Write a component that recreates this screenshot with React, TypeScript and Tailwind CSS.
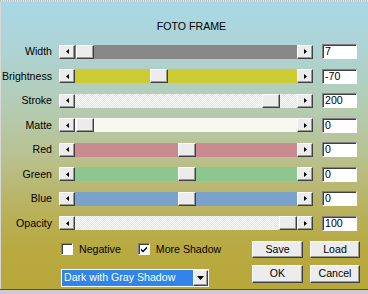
const raised =
  "border border-t-white border-l-white border-r-[#404040] border-b-[#404040] shadow-[inset_-1px_-1px_#9a9a9a] bg-[#ececec]";
const sunken =
  "border border-t-[#808080] border-l-[#808080] border-r-white border-b-white shadow-[inset_1px_1px_#404040] bg-white";

type Row = { label: string; value: string; thumb: number; track: string };

const rows: Row[] = [
  { label: "Width", value: "7", thumb: 1, track: "bg-[#888888]" },
  { label: "Brightness", value: "-70", thumb: 75, track: "bg-[#cccb33]" },
  {
    label: "Stroke",
    value: "200",
    thumb: 187,
    track: "bg-[repeating-conic-gradient(#ffffff_0_25%,#e2e2e2_0_50%)] bg-size-[2px_2px]",
  },
  { label: "Matte", value: "0", thumb: 1, track: "bg-[#f8f8f2]" },
  { label: "Red", value: "0", thumb: 103, track: "bg-[#c98a90]" },
  { label: "Green", value: "0", thumb: 103, track: "bg-[#8cc78f]" },
  { label: "Blue", value: "0", thumb: 103, track: "bg-[#7ba2ca]" },
  {
    label: "Opacity",
    value: "100",
    thumb: 204,
    track: "bg-[repeating-conic-gradient(#ffffff_0_25%,#e2e2e2_0_50%)] bg-size-[2px_2px]",
  },
];

function Arrow({ dir }: { dir: "left" | "right" | "down" }) {
  if (dir === "down")
    return (
      <svg width="7" height="4" viewBox="0 0 7 4">
        <path d="M0 0h7L3.5 4z" fill="#000" />
      </svg>
    );
  return (
    <svg width="3" height="5" viewBox="0 0 3 5">
      <path d={dir === "left" ? "M3 0v5L0 2.5z" : "M0 0v5l3-2.5z"} fill="#000" />
    </svg>
  );
}

function Slider({ row }: { row: Row }) {
  return (
    <div className="flex h-[14px] w-[254px]">
      <div className={`flex w-[16px] items-center justify-center ${raised}`}>
        <Arrow dir="left" />
      </div>
      <div className={`relative flex-1 ${row.track}`}>
        <div className={`absolute top-0 h-[14px] w-[18px] ${raised}`} style={{ left: row.thumb }} />
      </div>
      <div className={`flex w-[16px] items-center justify-center ${raised}`}>
        <Arrow dir="right" />
      </div>
    </div>
  );
}

function Check({ checked, label }: { checked?: boolean; label: string }) {
  return (
    <div className="flex items-center">
      <div className={`flex h-[12px] w-[12px] items-center justify-center ${sunken}`}>
        {checked && (
          <svg width="8" height="8" viewBox="0 0 8 8">
            <path d="M1 3.5l2 2L7 1.5v2L3 7.5 1 5.5z" fill="#000" />
          </svg>
        )}
      </div>
      <span className="ml-[6px]">{label}</span>
    </div>
  );
}

export default function App() {
  return (
    <div className="flex h-[294px] w-[368px] flex-col overflow-hidden bg-[#c8c8c8] font-['Liberation_Sans',sans-serif] text-[10.6px] leading-none text-black">
      <div className="h-[2px] bg-[repeating-linear-gradient(90deg,#bdbdbd_0_1px,#e6e6e6_1px_2px)]" />
      <div className="flex h-[287px] flex-col border-l border-l-[#d8d8d8] bg-[linear-gradient(180deg,#a8d8e6_0%,#aed3d2_18%,#b4cbb0_38%,#b9c08c_55%,#b9b25e_72%,#b8aa42_85%,#b8a83a_100%)]">
        <div className="mt-[19px] h-[13px] pl-[14px] text-center">FOTO FRAME</div>

        <div className="mt-[10px] flex flex-col gap-[9.5px]">
          {rows.map((row) => (
            <div key={row.label} className="flex h-[15px] items-center">
              <div className="w-[51px] text-right">{row.label}</div>
              <div className="ml-[7px]">
                <Slider row={row} />
              </div>
              <div className={`ml-[9px] flex h-[15px] w-[35px] items-center pl-[2px] ${sunken}`}>{row.value}</div>
            </div>
          ))}
        </div>

        <div className="mt-[10px] flex pl-[60px]">
          <div className="flex w-[191px] flex-col">
            <div className="flex h-[17px] items-center gap-[17px]">
              <Check label="Negative" />
              <Check checked label="More Shadow" />
            </div>
            <div className="mt-[11px] flex h-[18px] w-[148px] border border-white bg-white">
              <div className="flex flex-1 items-center bg-[#3185e8] pl-[2px] text-white">Dark with Gray Shadow</div>
              <div className={`flex w-[15px] items-center justify-center ${raised}`}>
                <Arrow dir="down" />
              </div>
            </div>
          </div>
          <div className="flex flex-col">
            <div className="flex gap-[7px]">
              <div className={`flex h-[17px] w-[51px] items-center justify-center ${raised}`}>Save</div>
              <div className={`flex h-[17px] w-[50px] items-center justify-center ${raised}`}>Load</div>
            </div>
            <div className="mt-[7px] flex gap-[7px]">
              <div className={`flex h-[18px] w-[51px] items-center justify-center ${raised}`}>OK</div>
              <div className={`flex h-[18px] w-[50px] items-center justify-center ${raised}`}>Cancel</div>
            </div>
          </div>
        </div>
      </div>
      <div className="h-[1px] bg-[#505050]" />
      <div className="flex-1 bg-[#cfc9d2]" />
    </div>
  );
}
